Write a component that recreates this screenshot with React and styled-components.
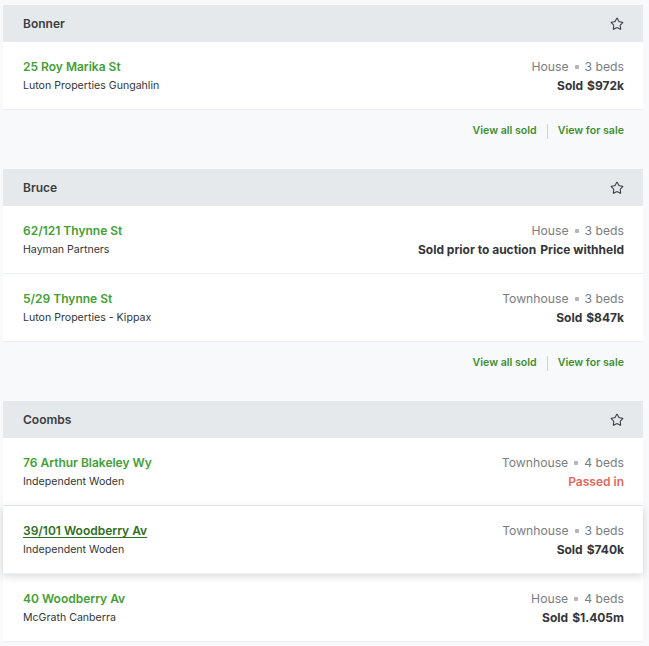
import React from "react";
import styled, { createGlobalStyle } from "styled-components";
import { Star } from "lucide-react";

const GlobalStyle = createGlobalStyle`
    body {
        margin: 0;
        background: #f8f9fb;
        font-family: Inter, "Noto Sans", Arial, sans-serif;
        -webkit-font-smoothing: antialiased;
    }
`;

const suburbs = [
    {
        name: "Bonner",
        footer: true,
        sales: [
            { address: "25 Roy Marika St", agency: "Luton Properties Gungahlin", type: "House", beds: 3, label: "Sold", price: "$972k" },
        ],
    },
    {
        name: "Bruce",
        footer: true,
        sales: [
            { address: "62/121 Thynne St", agency: "Hayman Partners", type: "House", beds: 3, label: "Sold prior to auction", price: "Price withheld" },
            { address: "5/29 Thynne St", agency: "Luton Properties - Kippax", type: "Townhouse", beds: 3, label: "Sold", price: "$847k" },
        ],
    },
    {
        name: "Coombs",
        footer: false,
        sales: [
            { address: "76 Arthur Blakeley Wy", agency: "Independent Woden", type: "Townhouse", beds: 4, passed: true },
            { address: "39/101 Woodberry Av", agency: "Independent Woden", type: "Townhouse", beds: 3, label: "Sold", price: "$740k", hovered: true },
            { address: "40 Woodberry Av", agency: "McGrath Canberra", type: "House", beds: 4, label: "Sold", price: "$1.405m" },
        ],
    },
];

const App = () => {
    return (
        <>
            <GlobalStyle />
            <Page>
                {suburbs.map((s) => (
                    <Section key={s.name}>
                        <Card>
                            <Header>
                                <h2>{s.name}</h2>
                                <StarButton aria-label="Favourite">
                                    <Star size={14} strokeWidth={1.8} />
                                </StarButton>
                            </Header>
                            {s.sales.map((sale) => (
                                <Row key={sale.address} $hovered={sale.hovered}>
                                    <Left>
                                        <Address $hovered={sale.hovered}>{sale.address}</Address>
                                        <Agency>{sale.agency}</Agency>
                                    </Left>
                                    <Right>
                                        <Meta>
                                            {sale.type}
                                            <Dot />
                                            {sale.beds} beds
                                        </Meta>
                                        {sale.passed ? (
                                            <Passed>Passed in</Passed>
                                        ) : (
                                            <Price>
                                                {sale.label}
                                                <span>{sale.price}</span>
                                            </Price>
                                        )}
                                    </Right>
                                </Row>
                            ))}
                        </Card>
                        {s.footer && (
                            <Footer>
                                <FooterLink>View all sold</FooterLink>
                                <Divider />
                                <FooterLink>View for sale</FooterLink>
                            </Footer>
                        )}
                    </Section>
                ))}
            </Page>
        </>
    );
};

export default App;

const Page = styled.div`
    padding: 5px 6px 0 3px;
`;

const Section = styled.section`
    margin-bottom: 17px;
`;

const Card = styled.div`
    background: #fff;
`;

const Header = styled.div`
    display: flex;
    align-items: center;
    justify-content: space-between;
    height: 37px;
    padding: 0 19px 0 20px;
    background: #e6e9ec;

    > h2 {
        margin: 0;
        font-size: 12px;
        font-weight: 600;
        color: #3a3d42;
    }
`;

const StarButton = styled.button`
    display: flex;
    padding: 0;
    border: none;
    background: transparent;
    color: #3a3d42;
    cursor: pointer;
`;

const Row = styled.div`
    position: relative;
    display: flex;
    justify-content: space-between;
    padding: 15px 19px 14px 20px;
    border-bottom: 1px solid #eceef1;
    background: #fff;
    box-shadow: ${(p) => (p.$hovered ? "0 2px 8px rgba(0, 0, 0, 0.16)" : "none")};
    z-index: ${(p) => (p.$hovered ? 1 : 0)};
`;

const Left = styled.div`
    display: flex;
    flex-direction: column;
`;

const Right = styled.div`
    display: flex;
    flex-direction: column;
    align-items: flex-end;
`;

const Address = styled.a`
    font-size: 12px;
    line-height: 19px;
    font-weight: 600;
    color: ${(p) => (p.$hovered ? "#2f6d25" : "#42a035")};
    text-decoration: ${(p) => (p.$hovered ? "underline" : "none")};
    text-underline-offset: 2px;
    cursor: pointer;
`;

const Agency = styled.span`
    font-size: 10.6px;
    line-height: 19px;
    color: #33363a;
`;

const Meta = styled.span`
    display: flex;
    align-items: center;
    font-size: 12.2px;
    line-height: 19px;
    color: #7a7e83;
`;

const Dot = styled.span`
    width: 4px;
    height: 4px;
    margin: 0 6px;
    border-radius: 1px;
    background: #b3b7bb;
`;

const Price = styled.span`
    font-size: 12px;
    line-height: 19px;
    font-weight: 700;
    color: #33363b;

    > span {
        margin-left: 4px;
    }
`;

const Passed = styled.span`
    font-size: 12px;
    line-height: 19px;
    font-weight: 600;
    color: #e1685a;
`;

const Footer = styled.div`
    display: flex;
    justify-content: flex-end;
    align-items: center;
    padding: 12px 19px 12px 20px;
`;

const FooterLink = styled.a`
    font-size: 10.6px;
    line-height: 18px;
    font-weight: 600;
    color: #3f8e30;
    cursor: pointer;
`;

const Divider = styled.span`
    width: 1px;
    height: 15px;
    margin: 0 10px;
    background: #cfd3d7;
`;
